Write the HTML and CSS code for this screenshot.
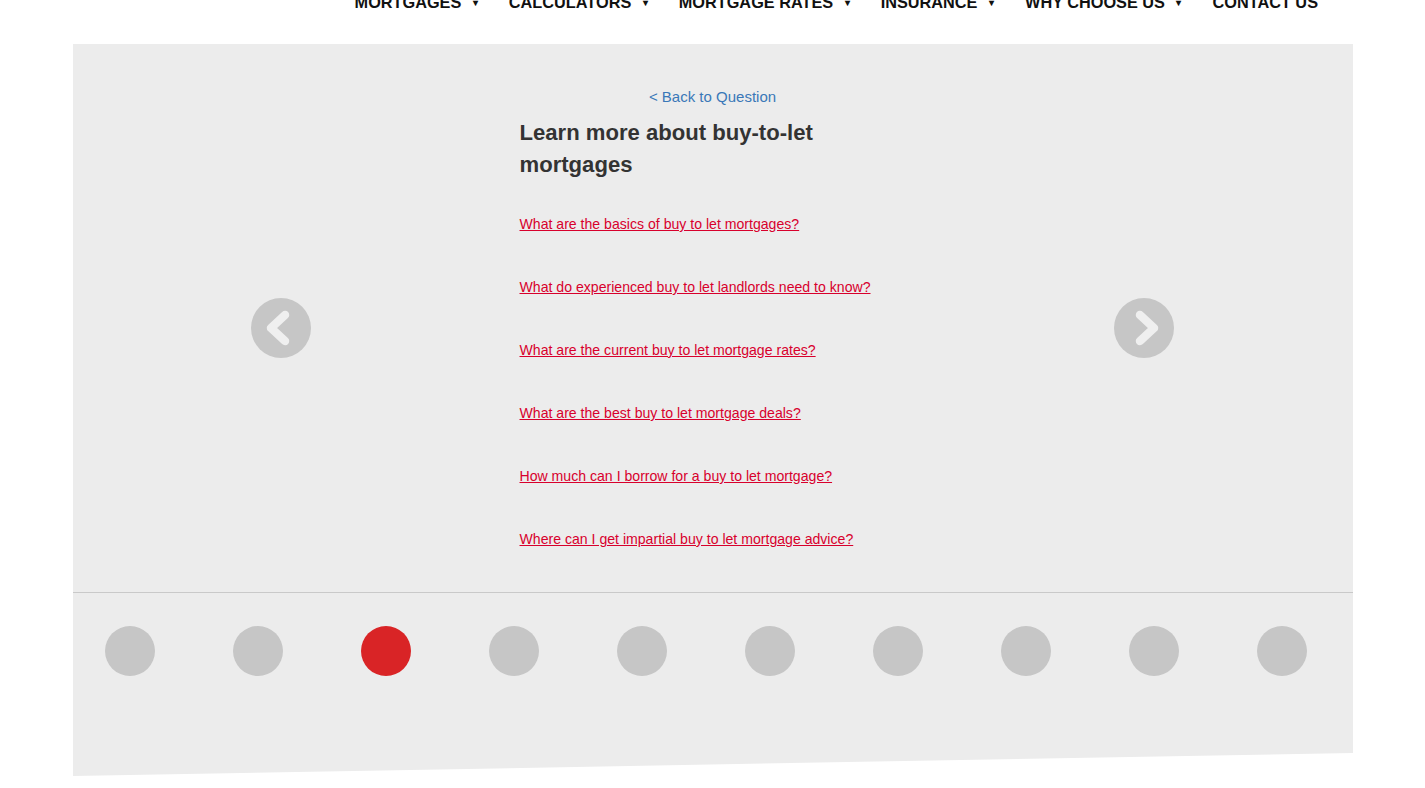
FILE: index.html
```html
<!DOCTYPE html>
<html lang="en">
<head>
<meta charset="utf-8">
<title>Learn more about buy-to-let mortgages</title>
<link rel="stylesheet" href="styles.css">
</head>
<body>
<header class="site-header">
  <ul class="main-nav">
    <li class="nav-item">MORTGAGES <span class="caret">&#9662;</span></li>
    <li class="nav-item">CALCULATORS <span class="caret">&#9662;</span></li>
    <li class="nav-item">MORTGAGE RATES <span class="caret">&#9662;</span></li>
    <li class="nav-item">INSURANCE <span class="caret">&#9662;</span></li>
    <li class="nav-item">WHY CHOOSE US <span class="caret">&#9662;</span></li>
    <li class="nav-item">CONTACT US</li>
  </ul>
</header>
<main class="panel">
  <section class="slide-area">
    <button class="arrow arrow-prev" aria-label="Previous">
      <svg width="60" height="60" viewBox="0 0 60 60"><circle cx="30" cy="30" r="30" fill="#c6c6c6"/><polyline points="34,17 20,30 34,43" fill="none" stroke="#efefef" stroke-width="8.5" stroke-linecap="round" stroke-linejoin="round"/></svg>
    </button>
    <div class="slide-content">
      <a class="back-link" href="#">&lt; Back to Question</a>
      <h2 class="slide-title">Learn more about buy-to-let mortgages</h2>
      <ul class="question-list">
        <li><a href="#">What are the basics of buy to let mortgages?</a></li>
        <li><a href="#">What do experienced buy to let landlords need to know?</a></li>
        <li><a href="#">What are the current buy to let mortgage rates?</a></li>
        <li><a href="#">What are the best buy to let mortgage deals?</a></li>
        <li><a href="#">How much can I borrow for a buy to let mortgage?</a></li>
        <li><a href="#">Where can I get impartial buy to let mortgage advice?</a></li>
      </ul>
    </div>
    <button class="arrow arrow-next" aria-label="Next">
      <svg width="60" height="60" viewBox="0 0 60 60"><circle cx="30" cy="30" r="30" fill="#c6c6c6"/><polyline points="26,17 40,30 26,43" fill="none" stroke="#efefef" stroke-width="8.5" stroke-linecap="round" stroke-linejoin="round"/></svg>
    </button>
  </section>
  <nav class="dots">
    <span class="dot"></span>
    <span class="dot"></span>
    <span class="dot active"></span>
    <span class="dot"></span>
    <span class="dot"></span>
    <span class="dot"></span>
    <span class="dot"></span>
    <span class="dot"></span>
    <span class="dot"></span>
    <span class="dot"></span>
  </nav>
</main>
</body>
</html>
```
FILE: styles.css
```css
* { box-sizing: border-box; }
html, body { margin: 0; padding: 0; background: #fff; }
body {
  font-family: "Liberation Sans", Arial, Helvetica, sans-serif;
  width: 1425px;
  height: 788px;
  overflow: hidden;
}
.site-header {
  height: 44px;
  overflow: hidden;
}
.main-nav {
  list-style: none;
  margin: -6px 0 0 0;
  padding: 0 107px 0 0;
  display: flex;
  justify-content: flex-end;
  gap: 31px;
}
.nav-item {
  font-size: 16.3px;
  line-height: 16px;
  font-weight: bold;
  color: #111;
  white-space: nowrap;
}
.caret {
  font-size: 10px;
  margin-left: 7px;
  vertical-align: 2px;
}
.panel {
  margin: 0 72px 0 73px;
  width: 1280px;
  height: 732px;
  background: #ececec;
  clip-path: polygon(0 0, 100% 0, 100% 709px, 0 732px);
}
.slide-area {
  height: 549px;
  border-bottom: 1px solid #c9c9c9;
  display: flex;
  align-items: center;
  justify-content: space-between;
  padding: 0 179px 0 178px;
}
.arrow {
  width: 60px;
  height: 60px;
  padding: 0;
  border: 0;
  background: none;
  margin-top: 20px;
  cursor: pointer;
}
.arrow svg { display: block; }
.slide-content {
  width: 386px;
  align-self: stretch;
  padding-top: 43px;
  display: flex;
  flex-direction: column;
}
.back-link {
  display: block;
  text-align: center;
  font-size: 15px;
  line-height: 20px;
  color: #3a78b8;
  text-decoration: none;
}
.slide-title {
  margin: 10px 0 0 0;
  font-size: 22.1px;
  line-height: 32px;
  font-weight: bold;
  color: #333;
}
.question-list {
  list-style: none;
  margin: 33px 0 0 0;
  padding: 0;
  display: flex;
  flex-direction: column;
  gap: 43px;
}
.question-list li {
  font-size: 14.1px;
  line-height: 20px;
  white-space: nowrap;
}
.question-list a {
  color: #d8002c;
  text-decoration: underline;
}
.dots {
  display: flex;
  gap: 78px;
  padding: 33px 0 0 32px;
}
.dot {
  width: 50px;
  height: 50px;
  border-radius: 50%;
  background: #c6c6c6;
  flex: none;
}
.dot.active { background: #d92426; }
```
